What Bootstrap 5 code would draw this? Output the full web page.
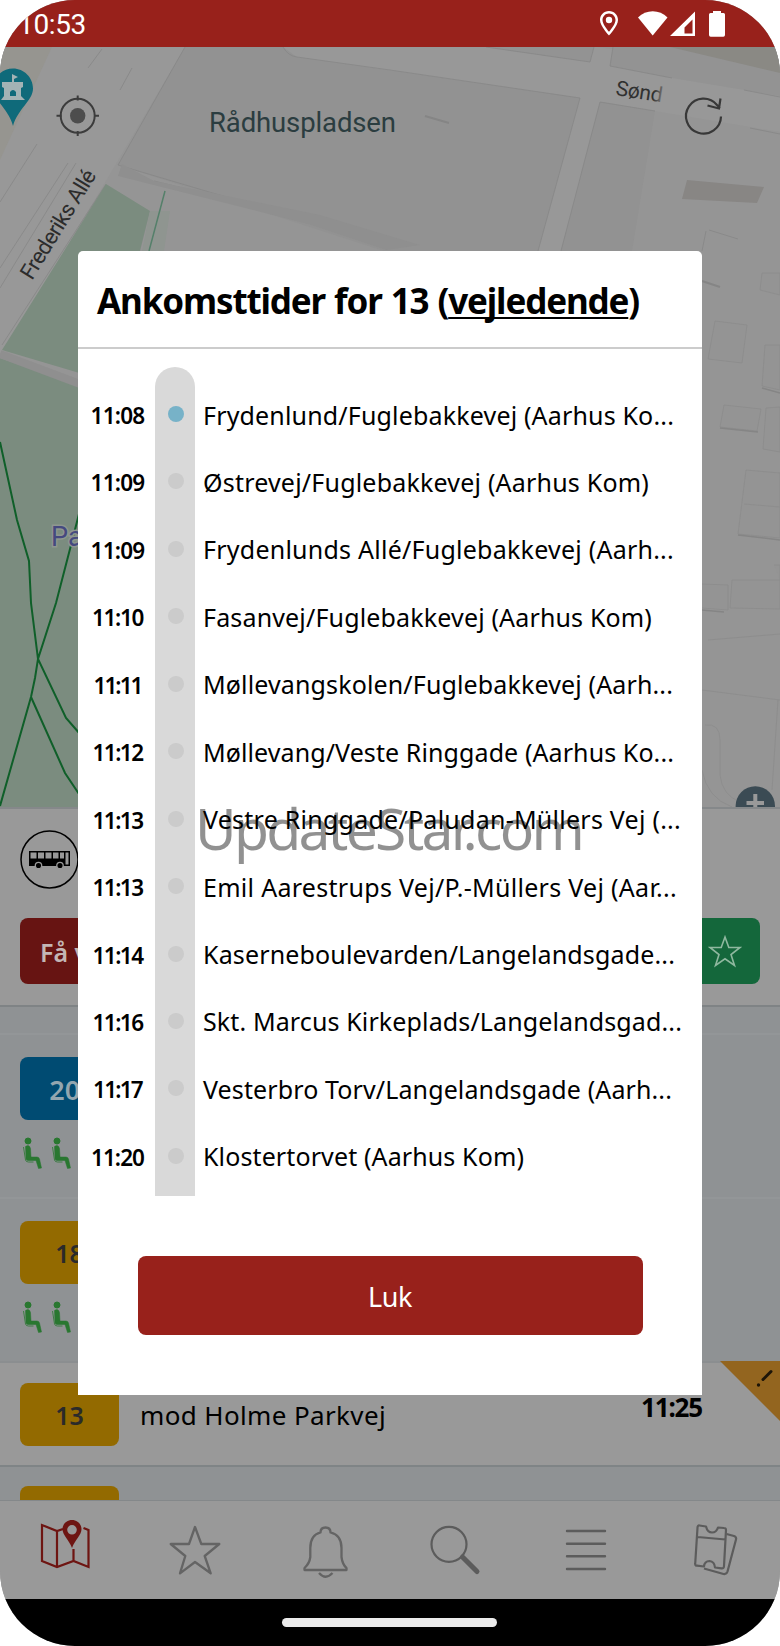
<!DOCTYPE html>
<html lang="da">
<head>
    <meta charset="UTF-8" />
    <meta name="viewport" content="width=device-width, initial-scale=1">
    <title>Ankomsttider</title>
    <link href="https://cdn.jsdelivr.net/npm/bootstrap@5.3.2/dist/css/bootstrap.min.css" rel="stylesheet">
    <style>
        body {
            background: #fff;
            font-family: "Noto Sans", "Open Sans", sans-serif;
            color: #000;
        }

        .phone {
            width: 780px;
            height: 1646px;
            border-radius: 75px;
            background: #999;
        }

        svg {
            display: block;
        }

        .status-bar {
            height: 47px;
            background: #98211b;
            color: #fff;
            padding-left: 18px;
            font: 28px/49px Roboto, sans-serif;
        }

        .map-area {
            height: 760px;
        }

        .map-area text {
            font-family: Roboto, sans-serif;
        }

        /* Stop panel */
        .stop-panel {
            height: 200px;
            border-top: 2px solid #85888a;
            border-bottom: 2px solid #7f8385;
            padding: 21px 20px;
        }

        .stop-actions {
            margin-top: 28px;
        }

        .stop-btn {
            height: 66px;
            border-radius: 8px;
            background: #671412;
            color: #c3b6b5;
            font-size: 25px;
            font-weight: 600;
            line-height: 68px;
            padding-left: 20px;
        }

        .stop-btn.favourite {
            width: 74px;
            background: #14673b;
            padding-left: 22px;
        }

        /* Departures */
        .departure {
            background: #8f9294;
            border-top: 2px solid #939698;
            padding: 22px 20px 0;
            height: 164px;
        }

        .departure.spacer {
            height: 26px;
            border-top: 0;
        }

        .departure.plain {
            background: #999;
            border-top-color: #8b8e90;
            height: 104px;
            padding-top: 20px;
        }

        .departure.last {
            border-top-color: #7f8486;
            padding-top: 19px;
        }

        .line-no {
            width: 99px;
            height: 63px;
            border-radius: 8px;
            background: #936a00;
            color: #2a2a2a;
            font-size: 25px;
            font-weight: 600;
            line-height: 65px;
            text-align: center;
        }

        .line-no.blue {
            background: #004b72;
            color: #93a6af;
            font-size: 27px;
            padding-left: 6px;
        }

        .towards {
            padding-left: 21px;
            font-size: 26px;
            line-height: 64px;
        }

        .leaves {
            padding-right: 58px;
            font-size: 26px;
            font-weight: 700;
            line-height: 49px;
        }

        .corner-flag {
            margin-top: -2px;
        }

        .tab-bar {
            height: 99px;
            border-top: 1px solid #84888a;
            background: #999;
        }

        .home-bar {
            height: 47px;
            background: #000;
        }

        .home-bar span {
            width: 215px;
            height: 9px;
            border-radius: 5px;
            background: #ebebeb;
            margin-right: 2px;
        }

        /* Dialog */
        .dialog-layer {
            padding: 251px 78px 0;
        }

        .times-dialog {
            height: 1144px;
            background: #fff;
            border-radius: 5px 5px 0 0;
        }

        .dialog-title {
            height: 98px;
            border-bottom: 2px solid #ccc;
            padding-left: 19px;
            font-size: 35px;
            font-weight: 700;
            line-height: 100px;
            word-spacing: 1px;
        }

        .dialog-title u {
            text-decoration-thickness: 2px;
            text-underline-offset: 3px;
            text-decoration-skip-ink: none;
        }

        .stop-times {
            margin-top: 18px;
            height: 829px;
        }

        .time-col {
            width: 77px;
            padding-top: 15px;
        }

        .time-col div, .name-col div {
            height: 67.45px;
            line-height: 67.45px;
            white-space: nowrap;
        }

        .time-col div {
            font-size: 22.5px;
            font-weight: 600;
            text-align: center;
            padding-left: 2px;
        }

        .rail {
            width: 40px;
            border-radius: 20px 20px 0 0;
            background: #d9d9d9;
            padding: 39px 0 0 12.5px;
        }

        .rail i {
            display: block;
            width: 16px;
            height: 16px;
            border-radius: 50%;
            background: #cbcbcb;
            margin-bottom: 51.45px;
        }

        .rail i.now {
            background: #77b2c8;
        }

        .name-col {
            padding: 14.5px 0 0 8px;
            font-size: 25px;
        }

        .close-btn {
            width: 505px;
            height: 79px;
            border-radius: 8px;
            background: #98211b;
            color: #fff;
            font-size: 27px;
            line-height: 81px;
            margin: 60px auto 0;
            padding: 0;
            border: 0;
        }

        .watermark {
            left: 195px;
            top: 788px;
            font-size: 57px;
            line-height: 80px;
            color: rgba(0, 0, 0, .43);
            white-space: nowrap;
        }
    </style>
</head>
<body>
    <div class="phone position-relative overflow-hidden d-flex flex-column">
        <!-- Status bar -->
        <div class="status-bar d-flex justify-content-between flex-shrink-0">
            <span data-w="68">10:53</span>
            <svg width="190" height="47" viewBox="590 0 190 47" fill="#fff">
                <path fill-rule="evenodd" d="M609 11c-5.200 0-9 4-9 9 0 6 9 15.500 9 15.500s9-9.500 9-15.500c0-5-3.800-9-9-9zm0 2.400c3.800 0 6.500 2.900 6.500 6.600 0 3.800-4.200 9-6.500 11.800-2.300-2.800-6.500-8-6.500-11.800 0-3.700 2.700-6.600 6.500-6.600z" />
                <circle cx="609" cy="20" r="3.200" />
                <path d="M638 17.500c8-8.500 21.500-8.500 29.500 0L652.700 35.500z" />
                <path fill-rule="evenodd" d="M695 11.500V36h-25zM692.500 19.500l-8 8v6h8z" />
                <path d="M713 13v-2h8v2h2.500q1.500 0 1.500 1.500v20.500q0 1.700-1.700 1.700h-12.600q-1.700 0-1.700-1.700V14.500q0-1.500 1.500-1.500z" />
            </svg>
        </div>

        <!-- Map -->
        <div class="map-area flex-shrink-0">
            <svg width="780" height="760" viewBox="0 47 780 760">
                <defs>
                    <linearGradient id="labelFade">
                        <stop offset=".8" stop-color="#303030" />
                        <stop offset="1" stop-color="#303030" stop-opacity=".35" />
                    </linearGradient>
                </defs>
                <rect y="47" width="780" height="760" fill="#959595" />
                <path d="M0 47h185L0 360z" fill="#989898" />
                <path d="M0 47h52L0 160z" fill="#969590" />
                <path d="M185 47h98l14 10 93 13 190 28-42 155H390L118 165z" fill="#929292" />
                <path d="M283 47l14 10 283 41-42 153h23l40-149 180 30V75L598 47z" fill="#989898" />
                <path d="M486 47l104 15 4-15zM613 47l-3 19 62 12 108 18V47z" fill="#939393" />
                <path d="M600 102l55 9-23 140h-71z" fill="#929292" />
                <path d="M670 47l110 26V47z" fill="#8a8984" />
                <path d="M687 180l77 7-7 16-75-4z" fill="#888684" />
                <g fill="none" stroke="#868686" stroke-width=".8">
                    <path d="M185 47L118 165M106 184L2 345M283 47q5 9 14 10l93 13 190 28-42 153M486 47l104 15 4-15M613 47l-3 19 62 12M561 251l39-149 55 9M744 90l36 7M750 128l30 6" />
                    <path d="M102 49L88 68M132 68l-12 22M37 144L0 202M68 163L0 268M76 163L0 288M154 181l250 62M118 165l270 80" />
                    <path d="M706 231l-4 20M709 230l29 9" />
                </g>
                <path d="M122 164l32 17 166 34 100 30-34 5-78-26-190-48z" fill="#8f8f8f" />
                <path d="M425 116l24 7M702 281l18 6" stroke="#858585" stroke-width="2" />
                <g fill="#949494" stroke="#8b8b8b" stroke-width=".8">
                    <path d="M715 321l32 4-5 38-34-4z" />
                    <path d="M762 273h18v22l-20-5zM765 345h15v45l-18-4zM724 405l37 4-4 22-37-4zM766 408l14-1v45l-17-3zM746 470l34 3v65l-42-4z" />
                    <path d="M744 504l36 3M702 584l26 1v25l-26-2M732 580h48v29l-50-1zM774 565h6v15M708 640l72-6M702 690l78 10M778 700l-6 90" />
                    <path d="M705 725q15-2 15 15v35q2 20 20 27M702 770q5 28 30 37" fill="none" />
                </g>
                <path d="M702 610l22 2M720 428l38 4M738 535l42 5M762 388l18 5" stroke="#858585" stroke-width="1.500" />
                <!-- park -->
                <path d="M106 184l44 27-10 40v140L2 350z" fill="#7b8c7f" />
                <path d="M0 358l142 50v399H0z" fill="#7b8c7f" />
                <path d="M150 211l20 0-6 40h-22z" fill="#8f9590" />
                <path d="M0 354l80 30" stroke="#8f8f8f" stroke-width="8" />
                <path d="M165 191l-8 30-8 30" fill="none" stroke="#55806a" stroke-width="1.500" />
                <g fill="none" stroke="#0f5f29" stroke-width="2">
                    <path d="M0 442l17 78 12 41 2 42 7 56-3 19-4 19L0 806M80 510l-10 39-14 54-18 56 28 59 14 16M31 697l34 76 14 21" />
                </g>
                <text x="51" y="546" font-size="27" fill="#45497f" stroke="#8f9790" stroke-width="3" paint-order="stroke">Pa</text>
                <text x="209" y="132" font-size="27.500" fill="#2b3d40" textLength="187">Rådhuspladsen</text>
                <text transform="translate(32 281) rotate(-58.500)" font-size="22" fill="#2c2c2c" textLength="124">Frederiks Allé</text>
                <text transform="translate(615 95) rotate(9)" font-size="21" fill="url(#labelFade)" textLength="47">Sønd</text>
                <!-- castle pin -->
                <path d="M13 68.500c11 0 20 9 20 20 0 12-15 20-20 37.500C8 108-7 100-7 88.500c0-11 9-20 20-20z" fill="#0f6a7a" />
                <path d="M12 82v-8l6 3-4 2v3h9v5l-2 1v8l4 4H1l3-4v-8l-2-1v-5z" fill="#a3b3b5" />
                <path d="M10 96v-4q3-4 6 0v4z" fill="#0f6a7a" />
                <!-- locate -->
                <g fill="none" stroke="#3c3c3c" stroke-width="2">
                    <circle cx="77.700" cy="115.700" r="17" />
                    <path d="M77.700 95.500v5M77.700 131v5M56.500 115.700h5M94 115.700h5" />
                </g>
                <circle cx="77.700" cy="115.700" r="7.700" fill="#4d4d4d" />
                <!-- refresh -->
                <path d="M721 116.500a17.500 17.500 0 1 1-4-11.500l3 3M720.500 98.500l-1.500 10-11.500-3" fill="none" stroke="#383838" stroke-width="2.200" />
                <circle cx="755.300" cy="806" r="19.700" fill="#3b4b54" />
                <path d="M755.300 794v22M746.500 803h17.500" stroke="#999" stroke-width="4" />
            </svg>
        </div>

        <!-- Selected stop -->
        <div class="stop-panel flex-shrink-0 d-flex flex-column">
            <svg width="60" height="60" viewBox="0 0 60 60">
                <circle cx="29.500" cy="29.500" r="28.500" fill="none" stroke="#000" stroke-width="1.500" />
                <path d="M9 21h41v15H9z" />
                <path d="M10.500 22.500h6v6h-6zM18 22.500h6v6h-6zM25.500 22.500h6v6h-6zM33 22.500h5.500v6H33zM40 22.500h4v6h-4zM45.500 22.500h3v12h-3z" fill="#999" />
                <g stroke="#999" stroke-width="1.300"><circle cx="18.500" cy="35.500" r="3.200" /><circle cx="40" cy="35.500" r="3.200" /></g>
            </svg>
            <div class="stop-actions d-flex">
                <div class="stop-btn flex-grow-1">Få v</div>
                <div class="stop-btn favourite">
                    <svg width="34" height="66" viewBox="0 0 34 66"><path d="M17 19l3.800 10.500h11.200l-9 7 3.500 11-9.500-6.700-9.500 6.700 3.500-11-9-7h11.200z" fill="none" stroke="#8fb89f" stroke-width="1.600" /></svg>
                </div>
            </div>
        </div>

        <!-- Departures -->
        <div class="flex-grow-1 overflow-hidden">
            <div class="departure spacer"></div>
            <div class="departure">
                <div class="line-no blue">200</div>
                <svg class="mt-3" width="60" height="36" viewBox="0 0 60 36">
                    <g id="seat" fill="#297730" stroke="#297730">
                        <circle cx="8" cy="5" r="3" />
                        <path d="M5.500 10.500q4-2.500 5 2l.5 8.500h6q2 0 2.500 2l2 9-3 .5-2.500-8H8q-2 0-2-2z" stroke-width=".5" />
                        <path d="M3.500 11l2 13q.5 2 3 2h5" fill="none" stroke-width=".8" />
                    </g>
                    <use href="#seat" x="29" />
                </svg>
            </div>
            <div class="departure">
                <div class="line-no">18</div>
                <svg class="mt-3" width="60" height="36" viewBox="0 0 60 36">
                    <use href="#seat" />
                    <use href="#seat" x="29" />
                </svg>
            </div>
            <div class="departure plain position-relative d-flex">
                <div class="line-no">13</div>
                <div class="towards"><span data-w="246">mod Holme Parkvej</span></div>
                <div class="leaves ms-auto"><span data-w="61">11:25</span></div>
                <svg class="corner-flag position-absolute top-0 end-0" width="60" height="60" viewBox="0 0 60 60">
                    <path d="M0 0h60v60z" fill="#93651f" />
                    <path d="M51 10.500L43 18.500" stroke="#1d1508" stroke-width="3" stroke-linecap="round" />
                    <circle cx="38.500" cy="24" r="1.700" fill="#1d1508" />
                </svg>
            </div>
            <div class="departure last">
                <div class="line-no"></div>
            </div>
        </div>

        <!-- Tabs -->
        <div class="tab-bar d-flex flex-shrink-0 align-items-center justify-content-around">
            <svg width="64" height="64" viewBox="0 0 64 64" fill="none" stroke="#6e1512" stroke-width="2.200">
                <path d="M30 11l-6 2-15-6v36l15 6 16.500-6 15 6V12l-5-2M24 13v36M40.500 31v12" />
                <path fill="#6e1512" stroke="none" fill-rule="evenodd" d="M39 2c-5.300 0-9.500 4-9.500 9.300C29.500 17 36 22 39 30c3-8 9.500-13 9.500-18.700C48.500 6 44.300 2 39 2zm0 5a4.800 4.800 0 1 1 0 9.600A4.800 4.800 0 0 1 39 7z" />
            </svg>
            <svg width="64" height="64" viewBox="0 0 64 64" fill="none" stroke="#646464" stroke-width="2.300" stroke-linejoin="round">
                <path d="M32 9l6.300 17h18L41.700 38l6 17.300L32 44 17 55.300 22.300 38 7.700 26H26z" />
            </svg>
            <svg width="64" height="64" viewBox="0 0 64 64" fill="none" stroke="#646464" stroke-width="2.300" stroke-linejoin="round">
                <path d="M11.500 52v-2q5-4.500 5.800-11V30q0-13 10.200-15.500 0-5 5-5t5 5Q48.500 17 48.500 30v9q.8 7 5 11v2zM26 55q6.500 7.500 13.500 0" />
            </svg>
            <svg width="64" height="64" viewBox="0 0 64 64" fill="none" stroke="#5c5c5c" stroke-width="2.200">
                <circle cx="26" cy="26.300" r="17.500" />
                <path d="M39.500 39L54 53.500" stroke-width="5" stroke-linecap="round" />
            </svg>
            <svg width="64" height="64" viewBox="0 0 64 64" stroke="#5c5c5c" stroke-width="2.400" stroke-linecap="round">
                <path d="M14 13h38M14 25.700h38M14 38.300h38M14 51h38" />
            </svg>
            <svg width="64" height="64" viewBox="0 0 64 64" fill="none" stroke="#5c5c5c" stroke-width="2.200" stroke-linejoin="round">
                <path d="M16.500 7.500l6.500 1q1.500 6 6 6t6-5l6 .5q2 0 2 2l-2 36q0 2.500-2.500 2.300l-6.500-.8q-.5-6-5.500-6.500-5 0-5.500 5.500l-7-.8q-2 0-1.800-2l2.300-36q0-2.500 2-2.200zM14.500 19l28 2.500" />
                <path d="M43.500 16l7.500 2q2.700 1 2 3.500l-8.500 32q-1 3-4 2.500L21 50.500" />
            </svg>
        </div>
        <div class="home-bar d-flex flex-shrink-0 justify-content-center align-items-center"><span></span></div>

        <!-- Dialog over the page -->
        <div class="dialog-layer position-absolute top-0 start-0 w-100 h-100">
            <div class="times-dialog d-flex flex-column">
                <div class="dialog-title flex-shrink-0"><span data-w="542">Ankomsttider for 13 (<u>vejledende</u>)</span></div>
                <div class="stop-times d-flex flex-shrink-0">
                    <div class="time-col" id="times"></div>
                    <div class="rail" id="rail"></div>
                    <div class="name-col" id="names"></div>
                </div>
                <button type="button" class="btn close-btn flex-shrink-0"><span data-w="44">Luk</span></button>
            </div>
        </div>
        <div class="watermark position-absolute"><span data-w="387">UpdateStar.com</span></div>
    </div>

    <script src="https://cdn.jsdelivr.net/npm/bootstrap@5.3.2/dist/js/bootstrap.bundle.min.js"></script>
    <script>
        // time, time width, stop name, name width
        const stops = [
            ["11:08", 54, "Frydenlund/Fuglebakkevej (Aarhus Ko...", 471],
            ["11:09", 54, "Østrevej/Fuglebakkevej (Aarhus Kom)", 446],
            ["11:09", 54, "Frydenlunds Allé/Fuglebakkevej (Aarh...", 471],
            ["11:10", 51, "Fasanvej/Fuglebakkevej (Aarhus Kom)", 449],
            ["11:11", 48, "Møllevangskolen/Fuglebakkevej (Aarh...", 470],
            ["11:12", 50, "Møllevang/Veste Ringgade (Aarhus Ko...", 471],
            ["11:13", 50, "Vestre Ringgade/Paludan-Müllers Vej (...", 478],
            ["11:13", 50, "Emil Aarestrups Vej/P.-Müllers Vej (Aar...", 474],
            ["11:14", 50, "Kaserneboulevarden/Langelandsgade...", 472],
            ["11:16", 50, "Skt. Marcus Kirkeplads/Langelandsgad...", 479],
            ["11:17", 49, "Vesterbro Torv/Langelandsgade (Aarh...", 469],
            ["11:20", 53, "Klostertorvet (Aarhus Kom)", 321]
        ];

        stops.forEach((s, i) => {
            document.getElementById("times").innerHTML += `<div><span data-w="${s[1]}">${s[0]}</span></div>`;
            document.getElementById("rail").innerHTML += `<i class="${i === 0 ? "now" : ""}"></i>`;
            document.getElementById("names").innerHTML += `<div><span data-w="${s[3]}">${s[2]}</span></div>`;
        });

        // spread the letters so each label fills its width
        document.querySelectorAll("[data-w]").forEach(el => {
            const gap = (el.dataset.w - el.getBoundingClientRect().width) / el.textContent.length;
            el.style.letterSpacing = gap + "px";
        });
    </script>
</body>
</html>
